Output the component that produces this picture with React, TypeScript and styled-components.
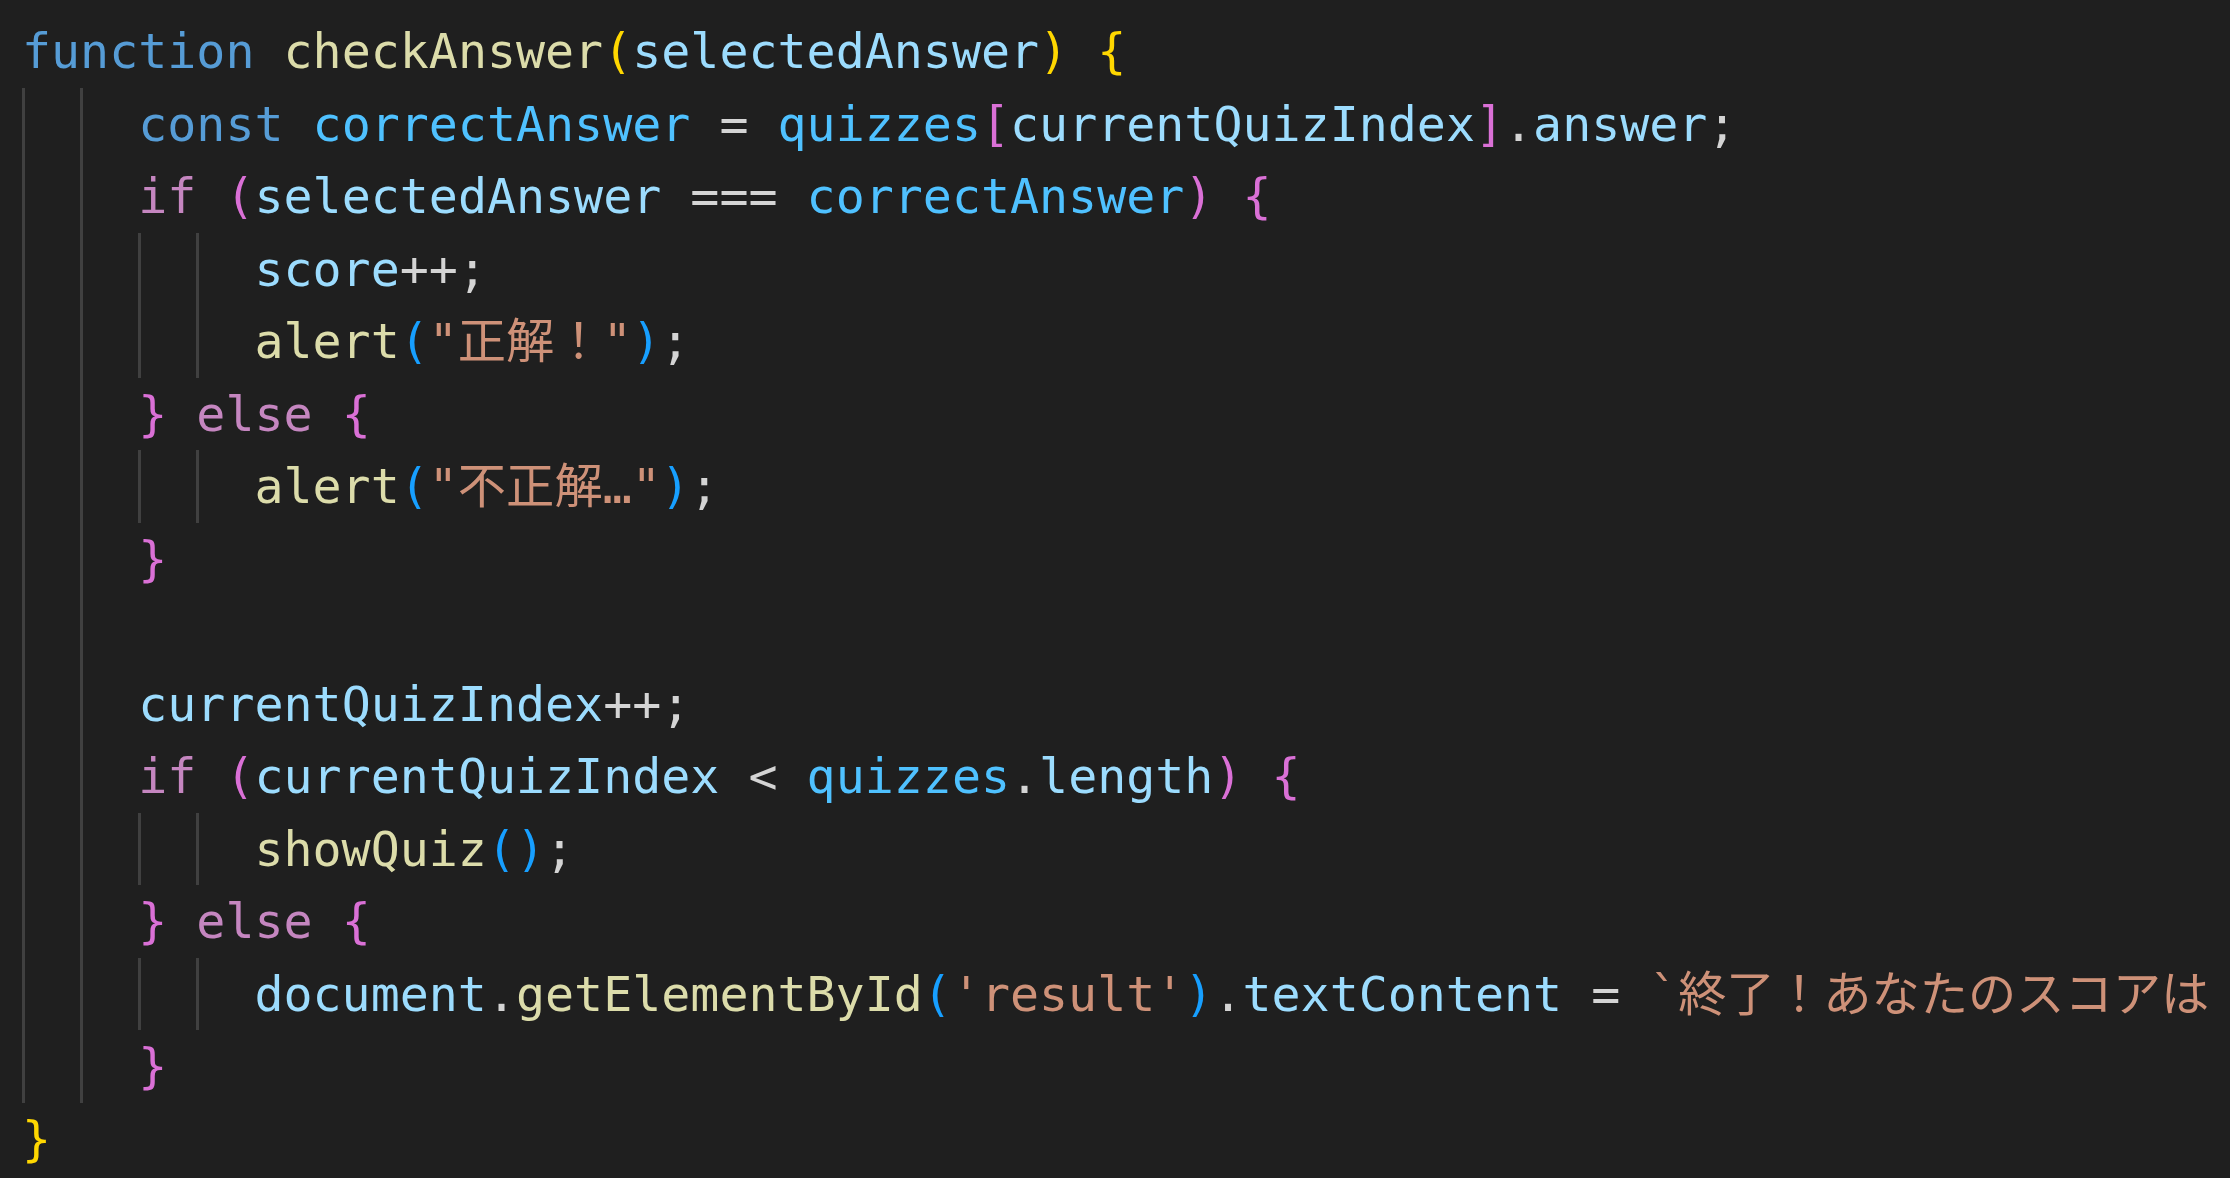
import React from "react";
import styled, { createGlobalStyle } from "styled-components";

const GlobalStyle = createGlobalStyle`
  html, body {
    margin: 0;
    padding: 0;
    background: #1f1f1f;
  }
`;

type Kind =
  | "kw"
  | "ctl"
  | "fn"
  | "var"
  | "cst"
  | "str"
  | "op"
  | "b1"
  | "b2"
  | "b3";

const COLORS: Record<Kind, string> = {
  kw: "#569cd6",
  ctl: "#c586c0",
  fn: "#dcdcaa",
  var: "#9cdcfe",
  cst: "#4fc1ff",
  str: "#ce9178",
  op: "#d4d4d4",
  b1: "#ffd700",
  b2: "#da70d6",
  b3: "#179fff",
};

type Tok = [string, Kind];
type CodeLine = { indent: number; toks: Tok[] };

const LINES: CodeLine[] = [
  {
    indent: 0,
    toks: [
      ["function", "kw"],
      [" ", "op"],
      ["checkAnswer", "fn"],
      ["(", "b1"],
      ["selectedAnswer", "var"],
      [")", "b1"],
      [" ", "op"],
      ["{", "b1"],
    ],
  },
  {
    indent: 2,
    toks: [
      ["const", "kw"],
      [" ", "op"],
      ["correctAnswer", "cst"],
      [" = ", "op"],
      ["quizzes", "cst"],
      ["[", "b2"],
      ["currentQuizIndex", "var"],
      ["]", "b2"],
      [".", "op"],
      ["answer", "var"],
      [";", "op"],
    ],
  },
  {
    indent: 2,
    toks: [
      ["if", "ctl"],
      [" ", "op"],
      ["(", "b2"],
      ["selectedAnswer", "var"],
      [" === ", "op"],
      ["correctAnswer", "cst"],
      [")", "b2"],
      [" ", "op"],
      ["{", "b2"],
    ],
  },
  {
    indent: 4,
    toks: [
      ["score", "var"],
      ["++;", "op"],
    ],
  },
  {
    indent: 4,
    toks: [
      ["alert", "fn"],
      ["(", "b3"],
      ["\"正解！\"", "str"],
      [")", "b3"],
      [";", "op"],
    ],
  },
  {
    indent: 2,
    toks: [
      ["}", "b2"],
      [" ", "op"],
      ["else", "ctl"],
      [" ", "op"],
      ["{", "b2"],
    ],
  },
  {
    indent: 4,
    toks: [
      ["alert", "fn"],
      ["(", "b3"],
      ["\"不正解…\"", "str"],
      [")", "b3"],
      [";", "op"],
    ],
  },
  { indent: 2, toks: [["}", "b2"]] },
  { indent: 2, toks: [] },
  {
    indent: 2,
    toks: [
      ["currentQuizIndex", "var"],
      ["++;", "op"],
    ],
  },
  {
    indent: 2,
    toks: [
      ["if", "ctl"],
      [" ", "op"],
      ["(", "b2"],
      ["currentQuizIndex", "var"],
      [" < ", "op"],
      ["quizzes", "cst"],
      [".", "op"],
      ["length", "var"],
      [")", "b2"],
      [" ", "op"],
      ["{", "b2"],
    ],
  },
  {
    indent: 4,
    toks: [
      ["showQuiz", "fn"],
      ["(", "b3"],
      [")", "b3"],
      [";", "op"],
    ],
  },
  {
    indent: 2,
    toks: [
      ["}", "b2"],
      [" ", "op"],
      ["else", "ctl"],
      [" ", "op"],
      ["{", "b2"],
    ],
  },
  {
    indent: 4,
    toks: [
      ["document", "var"],
      [".", "op"],
      ["getElementById", "fn"],
      ["(", "b3"],
      ["'result'", "str"],
      [")", "b3"],
      [".", "op"],
      ["textContent", "var"],
      [" = ", "op"],
      ["`終了！あなたのスコアは", "str"],
    ],
  },
  { indent: 2, toks: [["}", "b2"]] },
  { indent: 0, toks: [["}", "b1"]] },
];

const Editor = styled.div`
  box-sizing: border-box;
  width: 100vw;
  height: 100vh;
  overflow: hidden;
  background: #1f1f1f;
  padding: 15px 0 0 22px;
  font-family: "DejaVu Sans Mono", "Noto Sans CJK JP", monospace;
  font-size: 48.27px;
  line-height: 72.5px;
  color: #d4d4d4;
`;

const Line = styled.div`
  display: flex;
  align-items: stretch;
  height: 72.5px;
  white-space: pre;
`;

const Guide = styled.span`
  box-sizing: border-box;
  flex: none;
  width: 2ch;
  border-left: 3px solid #404040;
`;

const Token = styled.span<{ $kind: Kind }>`
  flex: none;
  color: ${(p) => COLORS[p.$kind]};
`;

export default function App() {
  return (
    <>
      <GlobalStyle />
      <Editor>
        {LINES.map((line, i) => (
          <Line key={i}>
            {Array.from({ length: line.indent }).map((_, g) => (
              <Guide key={g} />
            ))}
            {line.toks.map(([text, kind], t) => (
              <Token key={t} $kind={kind}>
                {text}
              </Token>
            ))}
          </Line>
        ))}
      </Editor>
    </>
  );
}
